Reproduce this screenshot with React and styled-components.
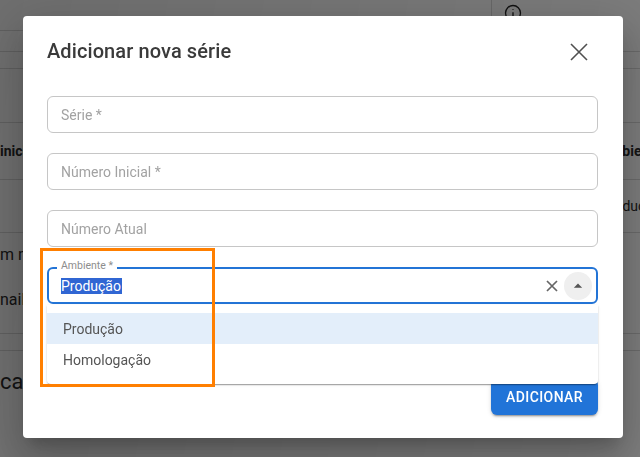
import React from "react";
import styled, { createGlobalStyle } from "styled-components";

const GlobalStyle = createGlobalStyle`
  html, body { margin: 0; padding: 0; }
  body {
    font-family: Roboto, "Noto Sans", "Liberation Sans", sans-serif;
    overflow: hidden;
    background: #ffffff;
  }
  * { box-sizing: border-box; }
`;

/* ---------- page underneath the modal ---------- */

const Page = styled.div`
  width: 640px;
  height: 457px;
  background: #fbfbfb;
  color: #2a2a2a;
  display: flex;
  flex-direction: column;
  overflow: hidden;
`;

const TopBar = styled.div`
  height: 52px;
  display: flex;
  border-bottom: 1px solid #d6d6d6;
`;

const TopLeft = styled.div`
  width: 492px;
  border-right: 1px solid #d6d6d6;
  display: flex;
  flex-direction: column;
`;

const TopTabs = styled.div`
  height: 31px;
  border-bottom: 1px solid #d6d6d6;
`;

const TopRight = styled.div`
  flex: 1;
  padding: 4px 0 0 12px;
  color: #222;
`;

const Band = styled.div`
  height: ${(p) => p.$h}px;
  flex: none;
  border-bottom: 1px solid #d6d6d6;
  display: flex;
  align-items: ${(p) => p.$align || "center"};
  justify-content: space-between;
  font-size: ${(p) => p.$size || 14}px;
  font-weight: ${(p) => p.$weight || 400};
  padding-top: ${(p) => p.$pt || 0}px;
`;

const Plain = styled.div`
  height: ${(p) => p.$h}px;
  flex: none;
  font-size: ${(p) => p.$size || 14}px;
  padding-top: ${(p) => p.$pt || 0}px;
`;

const StackCell = styled.div`
  display: flex;
  flex-direction: column;
  gap: 26px;
  padding-top: 12px;
  font-size: 16px;
`;

const RightCell = styled.span`
  width: 39px;
  white-space: nowrap;
  overflow: hidden;
`;

/* ---------- modal ---------- */

const Backdrop = styled.div`
  position: fixed;
  inset: 0;
  background: linear-gradient(100deg, rgba(0, 0, 0, 0.56), rgba(0, 0, 0, 0.5));
  padding: 16px 0 0 23px;
`;

const Dialog = styled.div`
  width: 600px;
  height: 422px;
  background: #ffffff;
  border-radius: 4px;
  box-shadow: 0 11px 15px -7px rgba(0, 0, 0, 0.2),
    0 24px 38px 3px rgba(0, 0, 0, 0.14), 0 9px 46px 8px rgba(0, 0, 0, 0.12);
  padding: 19px 25px 23px 24px;
  display: flex;
  flex-direction: column;
`;

const Header = styled.div`
  height: 32px;
  display: flex;
  align-items: center;
  justify-content: space-between;
`;

const Title = styled.h2`
  margin: 0;
  font-size: 20px;
  line-height: 32px;
  font-weight: 500;
  color: #3a3a3a;
  letter-spacing: 0.1px;
`;

const IconButton = styled.button`
  width: 40px;
  height: 40px;
  border: 0;
  padding: 0;
  background: transparent;
  display: flex;
  align-items: center;
  justify-content: center;
  margin-right: -1px;
  margin-top: 2px;
  color: #505050;
`;

const Form = styled.div`
  margin-top: 29px;
  display: flex;
  flex-direction: column;
  gap: 20px;
`;

const Field = styled.div`
  height: 37px;
  border: 1px solid #c6c6c6;
  border-radius: 6px;
  padding: 0 13px;
  display: flex;
  align-items: center;
  font-size: 14px;
  color: #a2a2a2;
`;

const AutoWrap = styled.div`
  position: relative;
`;

const AutoField = styled.div`
  height: 37px;
  border: 2px solid #2374d6;
  border-radius: 6px;
  padding: 0 4px 0 12px;
  display: flex;
  align-items: center;
  font-size: 14px;
`;

const FloatLabel = styled.span`
  position: absolute;
  left: 10px;
  top: -8px;
  padding: 0 4px;
  background: #ffffff;
  font-size: 10.5px;
  line-height: 14px;
  color: #8d8d8d;
`;

const Value = styled.span`
  flex: 1;
  display: flex;
`;

const Selected = styled.span`
  background: #3066d3;
  color: #ffffff;
  line-height: 16px;
  font-size: 14px;
  padding-right: 1px;
`;

const ClearButton = styled.span`
  width: 20px;
  height: 20px;
  display: flex;
  align-items: center;
  justify-content: center;
  color: #666;
  margin-right: 2px;
`;

const PopupButton = styled.span`
  width: 28px;
  height: 28px;
  border-radius: 50%;
  background: #efefef;
  display: flex;
  align-items: center;
  justify-content: center;
  color: #555;
`;

const Popup = styled.ul`
  position: absolute;
  left: 0;
  right: 0;
  top: calc(100% + 1px);
  height: 79px;
  margin: 0;
  padding: 8px 0 0;
  list-style: none;
  background: #ffffff;
  border-radius: 0 0 4px 4px;
  box-shadow: 0 2px 1px -1px rgba(0, 0, 0, 0.25),
    0 1px 2px 0 rgba(0, 0, 0, 0.14), 0 1px 3px 0 rgba(0, 0, 0, 0.1);
  z-index: 2;
`;

const Option = styled.li`
  height: 31px;
  padding: 0 16px;
  display: flex;
  align-items: center;
  font-size: 14px;
  color: #555555;
  background: ${(p) => (p.$active ? "rgba(25, 118, 210, 0.12)" : "transparent")};
`;

const Actions = styled.div`
  margin-top: auto;
  display: flex;
  justify-content: flex-end;
`;

const PrimaryButton = styled.button`
  height: 36px;
  padding: 0 15px;
  border: 0;
  border-radius: 6px;
  background: #2174d8;
  color: #ffffff;
  font-family: inherit;
  font-size: 14px;
  font-weight: 500;
  letter-spacing: 0.4px;
  box-shadow: 0 3px 1px -2px rgba(0, 0, 0, 0.2), 0 2px 2px 0 rgba(0, 0, 0, 0.14),
    0 1px 5px 0 rgba(0, 0, 0, 0.12);
`;

/* callout frame drawn over the field */
const Callout = styled.div`
  position: fixed;
  left: 40px;
  top: 248px;
  width: 175px;
  height: 139px;
  border: 3px solid #ff7f00;
  pointer-events: none;
  z-index: 5;
`;

const CloseIcon = () => (
  <svg width="18" height="18" viewBox="0 0 18 18" fill="none">
    <path d="M1 1L17 17M17 1L1 17" stroke="currentColor" strokeWidth="1.6" />
  </svg>
);

const SmallClose = () => (
  <svg width="12" height="12" viewBox="0 0 12 12" fill="none">
    <path d="M1 1L11 11M11 1L1 11" stroke="currentColor" strokeWidth="1.7" />
  </svg>
);

const ArrowUp = () => (
  <svg width="20" height="20" viewBox="0 0 24 24">
    <path d="M7 14l5-5 5 5z" fill="currentColor" />
  </svg>
);

const InfoIcon = () => (
  <svg width="18" height="18" viewBox="0 0 24 24" fill="none" stroke="currentColor" strokeWidth="1.8">
    <circle cx="12" cy="12" r="10" />
    <path d="M12 11v6M12 7v1" />
  </svg>
);

export default function App() {
  return (
    <>
      <GlobalStyle />
      <Page>
        <TopBar>
          <TopLeft>
            <TopTabs />
          </TopLeft>
          <TopRight>
            <InfoIcon />
          </TopRight>
        </TopBar>
        <Band $h={17} />
        <Band $h={54} />
        <Band $h={57} $weight={700}>
          <span>inicial</span>
          <RightCell>Ambiente</RightCell>
        </Band>
        <Band $h={53}>
          <span />
          <RightCell>Produção</RightCell>
        </Band>
        <Band $h={101} $align="flex-start">
          <StackCell>
            <span>m nome</span>
            <span>nail</span>
          </StackCell>
        </Band>
        <Band $h={17} />
        <Plain $h={60} $size={22} $pt={18}>
          ca
        </Plain>
      </Page>

      <Backdrop>
        <Dialog>
          <Header>
            <Title>Adicionar nova série</Title>
            <IconButton aria-label="Fechar">
              <CloseIcon />
            </IconButton>
          </Header>
          <Form>
            <Field>Série *</Field>
            <Field>Número Inicial *</Field>
            <Field>Número Atual</Field>
            <AutoWrap>
              <AutoField>
                <Value>
                  <Selected>Produção</Selected>
                </Value>
                <ClearButton>
                  <SmallClose />
                </ClearButton>
                <PopupButton>
                  <ArrowUp />
                </PopupButton>
              </AutoField>
              <FloatLabel>Ambiente *</FloatLabel>
              <Popup>
                <Option $active>Produção</Option>
                <Option>Homologação</Option>
              </Popup>
            </AutoWrap>
          </Form>
          <Actions>
            <PrimaryButton>ADICIONAR</PrimaryButton>
          </Actions>
        </Dialog>
      </Backdrop>
      <Callout />
    </>
  );
}
